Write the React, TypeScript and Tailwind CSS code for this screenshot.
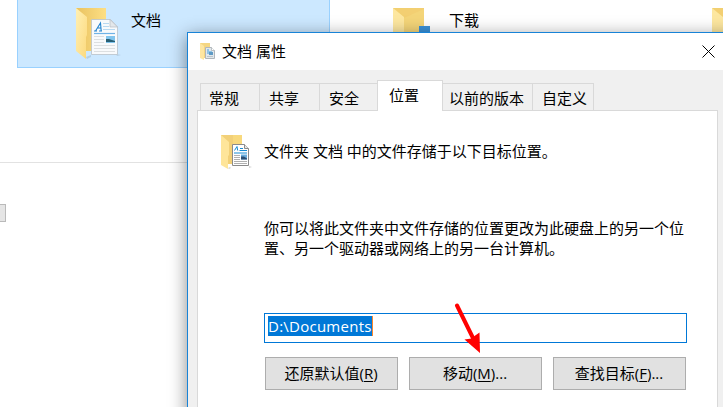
import type { ReactNode } from "react";

function DocumentsIcon({ className }: { className?: string }) {
  return (
    <svg className={className} viewBox="0 0 46 54">
      <defs>
        <linearGradient id="back" x1="0" y1="0" x2="1" y2="0">
          <stop offset="0" stopColor="#e9c260" />
          <stop offset="1" stopColor="#fddf84" />
        </linearGradient>
        <linearGradient id="flap" x1="0" y1="0" x2="1" y2="1">
          <stop offset="0" stopColor="#fff0b4" />
          <stop offset="1" stopColor="#fcd97c" />
        </linearGradient>
      </defs>
      <path d="M11 50l5-2v2l-4 2zM41 47l5 1-4 1z" fill="#7d96aa" opacity=".3" />
      <path d="M1 1h30v43H1z" fill="url(#back)" />
      <path d="M1 1l11 9v18l-1 2v22L1 44z" fill="url(#flap)" />
      <path d="M16.500 12.500h19l7 7.500V47.500h-26z" fill="#f8fafc" stroke="#b9c2c9" strokeWidth=".8" />
      <path d="M35 12.500V20h7.500z" fill="#e3e7ea" stroke="#b4bcc3" strokeWidth=".7" />
      <path d="M28 16.500h6M28 19.500h6M28 22.500h12" stroke="#b8d9f1" strokeWidth="1" />
      <path d="M19 26.500h21" stroke="#6fb2e6" strokeWidth="1.200" />
      <path d="M19 29.500h10M19 32.500h10M19 35.500h10M19 38.500h21M19 41.500h21M19 44.500h21" stroke="#dcdfe1" />
      <path d="M31 29h9v7h-9z" fill="#82c5ee" />
      <path d="M31 32l3 0 6 2v1h-9z" fill="#285f74" />
      <path d="M19 24h3M24 24h3M20.500 24l5-8 .7 8M22.500 21h3.500" stroke="#2484cf" strokeWidth="1.100" fill="none" />
    </svg>
  );
}

function PanelIcon() {
  return (
    <svg className="h-[36px] w-[32px] shrink-0" viewBox="0 0 32 36">
      <path d="M7 33l2-1 1 1-2 1zM28 31l3 1-3 1z" fill="#999" opacity=".4" />
      <path d="M0 0h21v29H0z" fill="#f2d078" />
      <path d="M12 0h9v9h-9z" fill="#f8d97d" />
      <path d="M0 0l8 7v13l-1 1v13l-7-4z" fill="#fee59a" />
      <path d="M11.500 9.500h12l4 4v17h-16z" fill="#fff" stroke="#8b8b8b" />
      <path d="M23.500 9.500v4h4" fill="#e6e6e6" stroke="#8b8b8b" />
      <path d="M13.500 15.500l2.500-4 .7 4M19 13.500h3M18.500 15.500h7.500M13 18h13" stroke="#168bd2" fill="none" />
      <path d="M13 20.500h6M13 22.500h6M13 24.500h6M13 26.500h13M13 28.500h13" stroke="#b0b0b0" />
      <path d="M20 19.500h6v5h-6z" fill="#6aaede" />
      <path d="M20 21.500l3 0 3 2v1h-6z" fill="#2b4f74" />
    </svg>
  );
}

function TitleIcon() {
  return (
    <svg className="h-[18px] w-[15px] shrink-0" viewBox="0 0 15 18">
      <path d="M0 0h10v15H0z" fill="#f4d682" />
      <path d="M0 0l4 3v14l-4-2z" fill="#fee6a1" />
      <path d="M5.500 4.500h6l3 3v8h-9z" fill="#e2e8ec" stroke="#b0b6bb" />
      <path d="M11.500 4.500v3h3" fill="#fff" stroke="#a4abb0" strokeWidth=".7" />
      <path d="M7 6h2v2h3v3H7z" fill="#8fc4e8" />
      <path d="M9 9h4v3H9z" fill="#5f9ac4" />
      <path d="M7 13.500h6" stroke="#b9c4cc" />
    </svg>
  );
}

function DownloadsIcon() {
  return (
    <svg className="h-[46px] w-[38px] shrink-0" viewBox="0 0 38 46">
      <path d="M0 0h31v44H0z" fill="#f1d070" />
      <path d="M1 1l30-1v22z" fill="#f3cf72" />
      <path d="M11 10L31 1v35H11z" fill="#f4d579" />
      <path d="M0 0l11 9v35H0z" fill="#fde7a0" />
      <path d="M26 18h11v20H26z" fill="#3b91d8" />
    </svg>
  );
}

function Tab({ className, children }: { className: string; children: ReactNode }) {
  return (
    <div className={`h-[27px] shrink-0 border-t border-[#d9d9d9] pt-[4px] leading-5 whitespace-nowrap ${className}`}>
      {children}
    </div>
  );
}

function Button({ label, accessKey, tail = "" }: { label: string; accessKey: string; tail?: string }) {
  return (
    <button className="flex h-[33px] w-[133px] items-center justify-center border border-[#adadad] bg-[#e1e1e1] pr-px pb-[2px] leading-5 whitespace-nowrap">
      <span>
        {label}(<span className="underline underline-offset-2">{accessKey}</span>){tail}
      </span>
    </button>
  );
}

function Explorer() {
  return (
    <div className="h-full w-full">
      <div className="flex h-[68px] pl-[17px]">
        <div className="flex w-[313px] shrink-0 border-x border-b border-[#99d1ff] bg-[#cce8ff] pt-[7px] pl-[57px]">
          <DocumentsIcon className="h-[54px] w-[46px] shrink-0" />
          <span className="ml-[10px] pt-[3px] leading-5">文档</span>
        </div>
        <div className="flex w-[318px] shrink-0 pt-[8px] pl-[63px]">
          <DownloadsIcon />
          <span className="ml-[18px] pt-[2px] leading-5">下载</span>
        </div>
        <div className="shrink-0 pt-[8px] pl-[64px]">
          <DownloadsIcon />
        </div>
      </div>
      <div className="mt-[94px] h-px bg-[#e2e2e2]" />
      <div className="mt-[41px] h-[18px] w-[6px] border-y border-r border-[#bababa] bg-[#e5e5e5]" />
    </div>
  );
}

function PropertiesDialog() {
  return (
    <div className="absolute top-[32px] left-[187px] h-[420px] w-[560px] border border-[#1883d7] bg-[#f0f0f0] shadow-[0_4px_17px_rgba(0,0,0,0.46)]">
      <div className="flex h-[37px] items-center bg-white">
        <div className="ml-[12px] pt-[1px]"><TitleIcon /></div>
        <span className="ml-[7px] w-[480px] pb-px leading-5">文档 属性</span>
        <svg className="h-[13px] w-[13px] shrink-0" viewBox="0 0 13 13">
          <path d="M.5.5l12 12M12.500.5l-12 12" stroke="#000" strokeWidth="1" />
        </svg>
      </div>
      <div className="flex h-[40px] items-end pl-[12px]">
        <Tab className="w-[59px] border-l pl-[8px]">常规</Tab>
        <Tab className="w-[60px] border-l pl-[9px]">共享</Tab>
        <Tab className="w-[58px] border-l pl-[9px]">安全</Tab>
        <div className="relative -mb-px h-[31px] w-[66px] shrink-0 border-x border-t border-[#d9d9d9] bg-white pt-[4px] pl-[11px] leading-5">位置</div>
        <Tab className="w-[89px] pl-[6px]">以前的版本</Tab>
        <Tab className="w-[62px] border-x pl-[9px]">自定义</Tab>
      </div>
      <div className="ml-[9px] h-[340px] w-[521px] border border-[#d9d9d9] bg-white pt-[24px] pl-[23px]">
        <div className="flex h-[36px]">
          <PanelIcon />
          <span className="ml-[11px] pt-[6px] leading-5">文件夹 文档 中的文件存储于以下目标位置。</span>
        </div>
        <div className="ml-[43px] w-[423px]">
          <p className="mt-[47px] leading-5 whitespace-nowrap">
            你可以将此文件夹中文件存储的位置更改为此硬盘上的另一个位
            <br />
            置、另一个驱动器或网络上的另一台计算机。
          </p>
          <div className="mt-[55px] h-[30px] border border-[#0078d7] pt-[2px] pl-[3px]">
            <div className="h-[20px] w-[105px] border-r border-[#ff8728] bg-[#0078d7] text-[15px] leading-[21px] tracking-[0.25px] whitespace-nowrap text-white">
              D:\Documents
            </div>
          </div>
          <div className="mt-[14px] ml-px flex gap-[11px]">
            <Button label="还原默认值" accessKey="R" />
            <Button label="移动" accessKey="M" tail="..." />
            <Button label="查找目标" accessKey="F" tail="..." />
          </div>
        </div>
      </div>
    </div>
  );
}

export default function App() {
  return (
    <div className="relative h-[407px] w-[723px] overflow-hidden bg-white font-['Open_Sans','Noto_Sans_CJK_SC',sans-serif] text-[15px] text-black">
      <Explorer />
      <PropertiesDialog />
      <svg className="absolute top-[303px] left-[453px] h-[52px] w-[30px]" viewBox="0 0 30 52">
        <path d="M4 2.500L20 35" stroke="#ff0000" strokeWidth="4" strokeLinecap="round" />
        <path d="M27 50L11.500 36.500l7-1 3-2.500 5-3.500z" fill="#ff0000" />
      </svg>
    </div>
  );
}
